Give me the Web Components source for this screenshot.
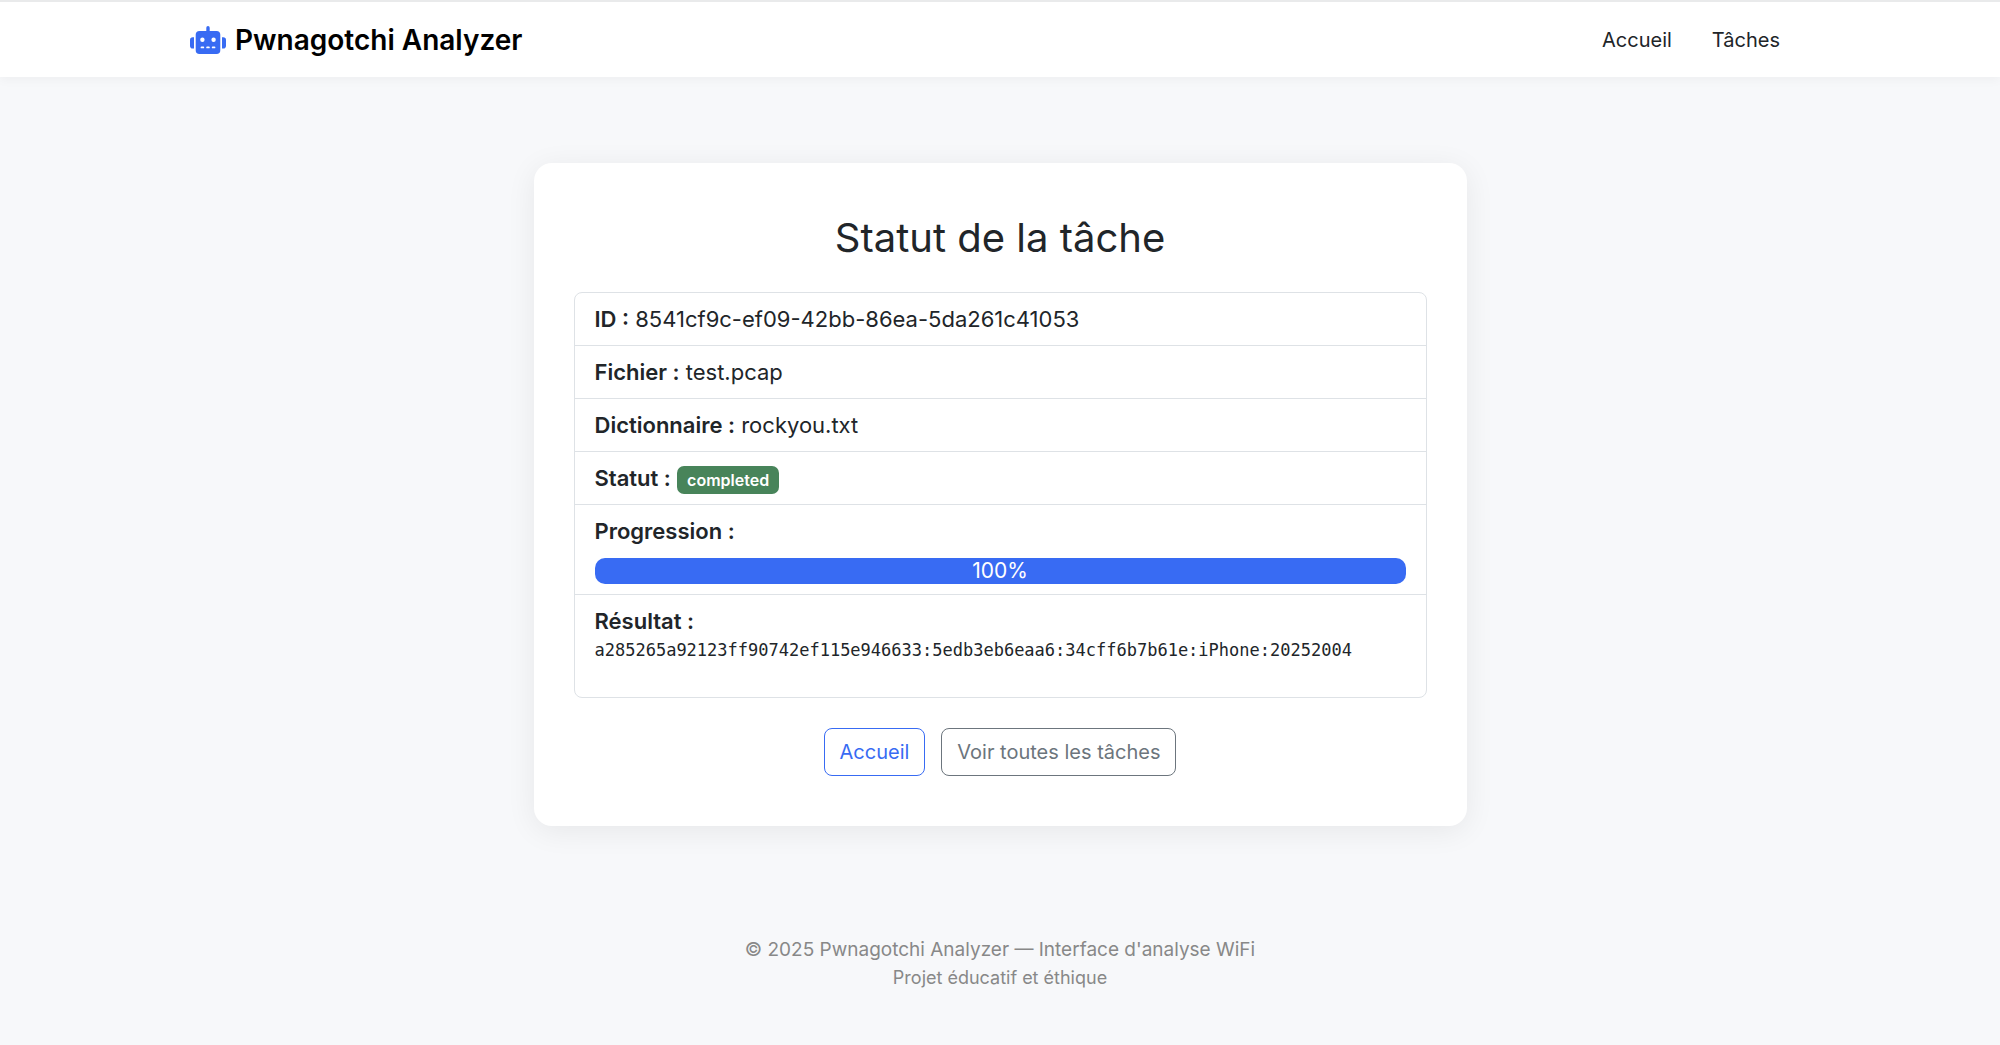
<!DOCTYPE html>
<html lang="fr">
<head>
<meta charset="utf-8">
<meta name="viewport" content="width=device-width, initial-scale=1">
<title>Statut de la tâche - Pwnagotchi Analyzer</title>
<style>
    body {
        margin: 0;
        min-height: 100vh;
        background: #f7f8fa;
        color: #212529;
        font-family: Inter, "Liberation Sans", sans-serif;
        font-size: 20px;
        line-height: 30px;
    }
</style>
</head>
<body>
<status-page></status-page>

<script>
class PageHeader extends HTMLElement {
    constructor () {
        super();

        const template = document.createElement('template');

        template.innerHTML = `
            <style>
                :host {
                    display: block;
                    background: #fff;
                    border-top: 2px solid #e9eaeb;
                    box-shadow: 0 3px 10px rgba(0, 0, 0, 0.04);
                }

                nav {
                    display: flex;
                    align-items: center;
                    justify-content: space-between;
                    box-sizing: border-box;
                    max-width: 1640px;
                    min-height: 75px;
                    margin: 0 auto;
                    padding: 0 20px 0 10px;
                }

                .brand {
                    display: flex;
                    align-items: center;
                    gap: 9px;
                    color: #000;
                    font-size: 28px;
                    font-weight: 600;
                    text-decoration: none;
                }

                .brand svg {
                    width: 36px;
                    height: 28px;
                    fill: #386bf3;
                }

                .links {
                    display: flex;
                }

                .links a {
                    padding: 10px 20px;
                    color: #212529;
                    text-decoration: none;
                }
            </style>
            <nav>
                <a class="brand" href="#">
                    <svg viewBox="0 0 36 28" aria-hidden="true">
                        <path fill-rule="evenodd" d="M18 0a1.7 1.7 0 0 1 1.7 1.7V5h6.800a3.800 3.800 0 0 1 3.800 3.800v15.400a3.800 3.800 0 0 1-3.800 3.800h-17a3.800 3.800 0 0 1-3.800-3.800V8.800A3.800 3.800 0 0 1 9.500 5h6.800V1.700A1.700 1.700 0 0 1 18 0zM12.400 11.600a2.200 2.200 0 1 0 0 4.400a2.200 2.200 0 1 0 0-4.400zM23.600 11.600a2.200 2.200 0 1 0 0 4.400a2.200 2.200 0 1 0 0-4.400zM11.500 20.500a.9 .9 0 0 0 0 1.800h1.800a.9 .9 0 0 0 0-1.800zM17.100 20.500a.9 .9 0 0 0 0 1.800h1.800a.9 .9 0 0 0 0-1.800zM22.700 20.500a.9 .9 0 0 0 0 1.800h1.800a.9 .9 0 0 0 0-1.800z"/>
                        <path d="M4 11.300v11.200H2.800A2.800 2.800 0 0 1 0 19.700v-5.600A2.800 2.800 0 0 1 2.800 11.300zM32 11.300h1.200a2.800 2.800 0 0 1 2.800 2.800v5.600a2.800 2.800 0 0 1-2.800 2.800H32z"/>
                    </svg>
                    Pwnagotchi Analyzer
                </a>
                <div class="links">
                    <a href="#">Accueil</a>
                    <a href="#">Tâches</a>
                </div>
            </nav>
        `;
        this.attachShadow({ mode: 'open' });
        this.shadowRoot.appendChild(template.content.cloneNode(true));
    }
}

class TaskRow extends HTMLElement {
    constructor () {
        super();

        const template = document.createElement('template');

        template.innerHTML = `
            <style>
                :host {
                    display: block;
                    padding: 10px 20px;
                    border-top: 1px solid #dee2e6;
                    font-size: 22px;
                    line-height: 32px;
                }

                :host(:first-child) {
                    border-top: 0;
                }

                strong {
                    font-weight: 600;
                }
            </style>
            <strong></strong>
            <slot></slot>
        `;
        this.attachShadow({ mode: 'open' });
        this.shadowRoot.appendChild(template.content.cloneNode(true));
    }

    connectedCallback () {
        this.shadowRoot.querySelector('strong').textContent = `${this.getAttribute('label')} :`;
    }
}

class StatusBadge extends HTMLElement {
    constructor () {
        super();

        const template = document.createElement('template');

        template.innerHTML = `
            <style>
                :host {
                    display: inline-block;
                    padding: 5px 10px;
                    border-radius: 7px;
                    background: #48845a;
                    color: #fff;
                    font-size: 16px;
                    font-weight: 600;
                    line-height: 18px;
                    vertical-align: baseline;
                }
            </style>
            <slot></slot>
        `;
        this.attachShadow({ mode: 'open' });
        this.shadowRoot.appendChild(template.content.cloneNode(true));
    }
}

class TaskProgress extends HTMLElement {
    constructor () {
        super();

        const template = document.createElement('template');

        template.innerHTML = `
            <style>
                :host {
                    display: block;
                    height: 26px;
                    margin-top: 11px;
                    border-radius: 10px;
                    overflow: hidden;
                    background: #e9ecef;
                }

                .bar {
                    height: 100%;
                    background: #386bf3;
                    color: #fff;
                    font-size: 21px;
                    line-height: 26px;
                    text-align: center;
                }
            </style>
            <div class="bar" role="progressbar" aria-label="Progression" aria-valuemin="0" aria-valuemax="100"></div>
        `;
        this.attachShadow({ mode: 'open' });
        this.shadowRoot.appendChild(template.content.cloneNode(true));
    }

    connectedCallback () {
        const value = this.getAttribute('value');
        const bar = this.shadowRoot.querySelector('.bar');
        bar.style.width = `${value}%`;
        bar.setAttribute('aria-valuenow', value);
        bar.textContent = `${value}%`;
    }
}

class TaskCard extends HTMLElement {
    constructor () {
        super();

        const template = document.createElement('template');

        template.innerHTML = `
            <style>
                :host {
                    display: block;
                    box-sizing: border-box;
                    width: 100%;
                    max-width: 933px;
                    padding: 50px 40px;
                    border-radius: 18px;
                    background: #fff;
                    box-shadow: 0 5px 30px rgba(0, 0, 0, 0.07);
                }

                h2 {
                    margin: 0 0 30px;
                    font-size: 40px;
                    font-weight: 400;
                    line-height: 49px;
                    text-align: center;
                }

                .rows {
                    border: 1px solid #dee2e6;
                    border-radius: 8px;
                }

                pre {
                    margin: 0;
                    padding-bottom: 24px;
                    overflow: auto;
                    font-family: "DejaVu Sans Mono", "Liberation Mono", monospace;
                    font-size: 17px;
                    line-height: 26px;
                }

                .actions {
                    display: flex;
                    justify-content: center;
                    gap: 16px;
                    margin-top: 30px;
                }

                .actions a {
                    padding: 8px 15px;
                    border: 1px solid currentColor;
                    border-radius: 8px;
                    color: #386bf3;
                    text-decoration: none;
                }

                .actions .secondary {
                    color: #6c757d;
                }
            </style>
            <h2>Statut de la tâche</h2>
            <div class="rows">
                <task-row label="ID">8541cf9c-ef09-42bb-86ea-5da261c41053</task-row>
                <task-row label="Fichier">test.pcap</task-row>
                <task-row label="Dictionnaire">rockyou.txt</task-row>
                <task-row label="Statut"><status-badge>completed</status-badge></task-row>
                <task-row label="Progression"><task-progress value="100"></task-progress></task-row>
                <task-row label="Résultat"><pre>a285265a92123ff90742ef115e946633:5edb3eb6eaa6:34cff6b7b61e:iPhone:20252004</pre></task-row>
            </div>
            <div class="actions">
                <a href="#">Accueil</a>
                <a class="secondary" href="#">Voir toutes les tâches</a>
            </div>
        `;
        this.attachShadow({ mode: 'open' });
        this.shadowRoot.appendChild(template.content.cloneNode(true));
    }
}

class PageFooter extends HTMLElement {
    constructor () {
        super();

        const template = document.createElement('template');

        template.innerHTML = `
            <style>
                :host {
                    display: block;
                    color: #888;
                    font-size: 19px;
                    line-height: 28px;
                    text-align: center;
                }

                p {
                    margin: 0;
                }

                small {
                    font-size: 18px;
                }
            </style>
            <footer>
                <p>© 2025 Pwnagotchi Analyzer — Interface d'analyse WiFi</p>
                <p><small>Projet éducatif et éthique</small></p>
            </footer>
        `;
        this.attachShadow({ mode: 'open' });
        this.shadowRoot.appendChild(template.content.cloneNode(true));
    }
}

class StatusPage extends HTMLElement {
    constructor () {
        super();

        const template = document.createElement('template');

        template.innerHTML = `
            <style>
                :host {
                    display: block;
                }

                main {
                    display: flex;
                    justify-content: center;
                    padding: 86px 20px 110px;
                }
            </style>
            <page-header></page-header>
            <main>
                <task-card></task-card>
            </main>
            <page-footer></page-footer>
        `;
        this.attachShadow({ mode: 'open' });
        this.shadowRoot.appendChild(template.content.cloneNode(true));
    }
}

customElements.define('page-header', PageHeader);
customElements.define('task-row', TaskRow);
customElements.define('status-badge', StatusBadge);
customElements.define('task-progress', TaskProgress);
customElements.define('task-card', TaskCard);
customElements.define('page-footer', PageFooter);
customElements.define('status-page', StatusPage);
</script>
</body>
</html>
